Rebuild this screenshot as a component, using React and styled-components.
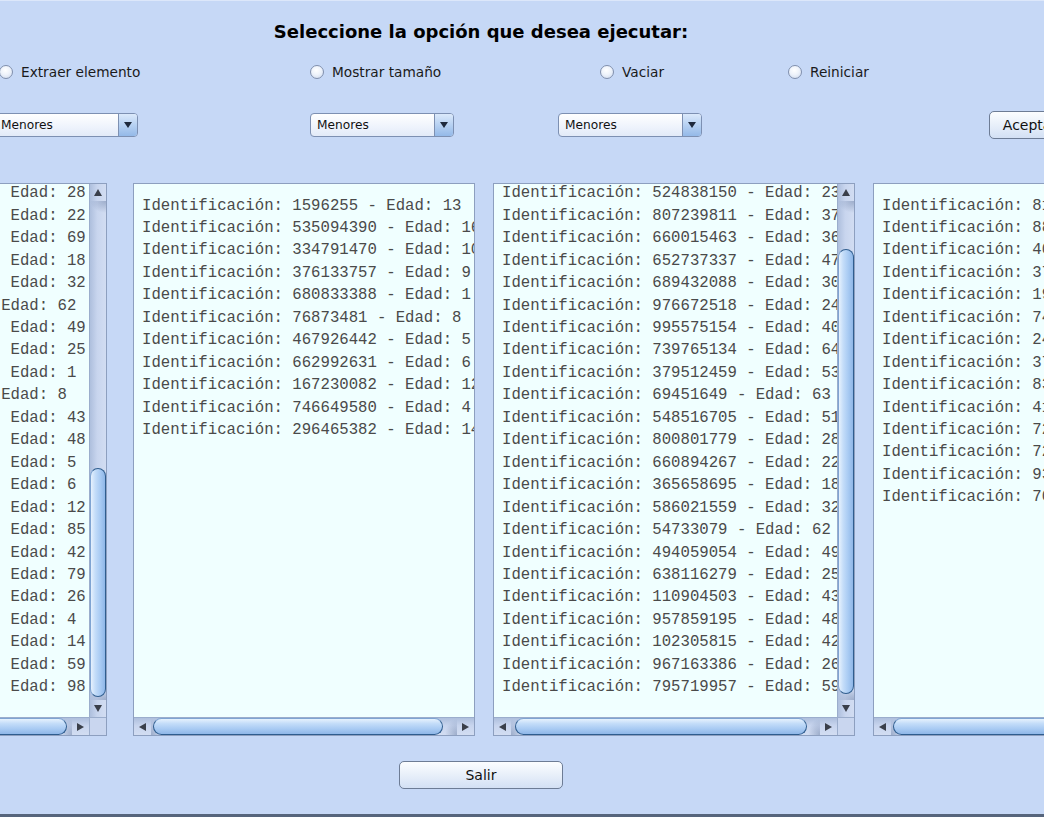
import React from 'react';
import styled, { createGlobalStyle } from 'styled-components';

const GlobalStyle = createGlobalStyle`
  html, body {
    margin: 0;
    padding: 0;
    background: #c6d8f6;
  }
  body {
    overflow: hidden;
  }
`;

const Frame = styled.div`
  width: 1044px;
  height: 817px;
  overflow: hidden;
  box-sizing: border-box;
  background: #c6d8f6;
  border-top: 1px solid #dce7fa;
  border-bottom: 3px solid #56657c;
  font-family: "DejaVu Sans", Verdana, sans-serif;
  color: #111;
`;

// the Swing window is wider than the shot, so it hangs off both sides
const Window = styled.div`
  width: 1490px;
  margin-left: -264px;
  display: flex;
  flex-direction: column;
`;

const Title = styled.h1`
  margin: 20px 0 0;
  font-size: 18px;
  line-height: 22px;
  font-weight: bold;
  text-align: center;
  color: #000;
`;

const RadioRow = styled.div`
  display: grid;
  grid-template-columns: 311px 290px 188px auto;
  padding-left: 263px;
  margin-top: 19px;
  height: 20px;
  align-items: center;
`;

const RadioOption = styled.label`
  display: flex;
  align-items: center;
  gap: 8px;
  font-size: 13.7px;
  color: #1a1a1a;
`;

const RadioDot = styled.span`
  width: 14px;
  height: 14px;
  box-sizing: border-box;
  border-radius: 50%;
  border: 1px solid #8190ad;
  background: radial-gradient(circle at 45% 35%, #ffffff 0%, #eef3fb 45%, #cbd7ec 100%);
`;

const ControlRow = styled.div`
  display: grid;
  grid-template-columns: 316px 248px 431px auto;
  padding-left: 258px;
  margin-top: 29px;
  height: 28px;
  align-items: center;
`;

const Combo = styled.div`
  width: 144px;
  height: 24px;
  box-sizing: border-box;
  display: flex;
  border: 1px solid #7d90b2;
  border-radius: 4px;
  overflow: hidden;
  background: linear-gradient(#ffffff, #eef3fc 60%, #e2eaf8);
`;

const ComboText = styled.span`
  flex: 1;
  padding-left: 6px;
  font-size: 12.2px;
  line-height: 23px;
  color: #111;
`;

const ComboArrow = styled.span`
  width: 18px;
  border-left: 1px solid #7d90b2;
  display: flex;
  align-items: center;
  justify-content: center;
  background: linear-gradient(#dbe9fb, #b7d1f2 50%, #94b9e8);

  &::after {
    content: '';
    border-left: 4px solid transparent;
    border-right: 4px solid transparent;
    border-top: 6px solid #1f2a3d;
  }
`;

const PushButton = styled.button`
  width: ${p => p.$width}px;
  height: 28px;
  box-sizing: border-box;
  padding: 0;
  border: 1px solid #6d7c95;
  border-radius: 5px;
  background: linear-gradient(#fbfdff, #e6eef9 55%, #d3e0f4);
  font-family: "DejaVu Sans", Verdana, sans-serif;
  font-size: 14px;
  color: #111;
`;

const PanelRow = styled.div`
  display: flex;
  padding-left: 9px;
  margin-top: 44px;
  height: 553px;
`;

const Panel = styled.div`
  flex: none;
  width: ${p => p.$width}px;
  margin-left: ${p => p.$gap}px;
  box-sizing: border-box;
  border: 1px solid #8d9fbf;
  background: #f0ffff;
  display: grid;
  grid-template-columns: ${p => (p.$vscroll ? '1fr 17px' : '1fr')};
  grid-template-rows: 1fr 18px;
  overflow: hidden;
`;

const Viewport = styled.div`
  overflow: hidden;
  min-width: 0;
`;

const Lines = styled.pre`
  margin: ${p => p.$shiftY}px 0 0 ${p => p.$shiftX}px;
  padding: 10.5px 0 0 8px;
  font-family: "Liberation Mono", "Courier New", monospace;
  font-size: 15.67px;
  line-height: 22.45px;
  color: #4a4a4a;
  white-space: pre;
`;

const VBar = styled.div`
  display: flex;
  flex-direction: column;
  box-sizing: border-box;
  border-left: 1px solid #9badcc;
  background: linear-gradient(to right, #aebfdd, #c8d5ee 45%, #d2ddf2);
`;

const HBar = styled.div`
  display: flex;
  box-sizing: border-box;
  border-top: 1px solid #9badcc;
  background: linear-gradient(#aebfdd, #c8d5ee 45%, #d2ddf2);
  min-width: 0;
`;

const Corner = styled.div`
  box-sizing: border-box;
  border-left: 1px solid #9badcc;
  border-top: 1px solid #9badcc;
  background: #c9d6ef;
`;

const arrowShapes = {
  up: 'border-left: 4px solid transparent; border-right: 4px solid transparent; border-bottom: 7px solid #3a3f4a;',
  down: 'border-left: 4px solid transparent; border-right: 4px solid transparent; border-top: 7px solid #3a3f4a;',
  left: 'border-top: 4px solid transparent; border-bottom: 4px solid transparent; border-right: 7px solid #3a3f4a;',
  right: 'border-top: 4px solid transparent; border-bottom: 4px solid transparent; border-left: 7px solid #3a3f4a;',
};

const ArrowBtn = styled.div`
  flex: none;
  width: ${p => (p.$dir === 'up' || p.$dir === 'down' ? 'auto' : '17px')};
  height: ${p => (p.$dir === 'up' || p.$dir === 'down' ? '17px' : 'auto')};
  display: flex;
  align-items: center;
  justify-content: center;

  &::after {
    content: '';
    ${p => arrowShapes[p.$dir]}
  }
`;

// shaded caps where the arrow buttons curve into the track
const Track = styled.div`
  flex: 1;
  display: flex;
  flex-direction: ${p => (p.$vertical ? 'column' : 'row')};
  overflow: hidden;
  min-width: 0;
  background: ${p =>
    p.$vertical
      ? `radial-gradient(ellipse 16px 12px at 100% 0, rgba(60, 85, 130, 0.35), transparent 100%),
         radial-gradient(ellipse 16px 12px at 100% 100%, rgba(60, 85, 130, 0.35), transparent 100%)`
      : `radial-gradient(ellipse 12px 16px at 0 100%, rgba(60, 85, 130, 0.35), transparent 100%),
         radial-gradient(ellipse 12px 16px at 100% 100%, rgba(60, 85, 130, 0.35), transparent 100%)`};
`;

const VThumb = styled.div`
  flex: none;
  margin-top: ${p => p.$start}px;
  height: ${p => p.$size}px;
  box-sizing: border-box;
  border: 1px solid #2f5d8e;
  border-left-color: #7fa4d2;
  border-radius: 9px;
  background: linear-gradient(to right, #e6f1fd 0%, #c4ddf9 30%, #a9cbf3 65%, #8fb7e8 100%);
`;

const HThumb = styled.div`
  flex: none;
  margin-left: ${p => p.$start}px;
  width: ${p => p.$size}px;
  box-sizing: border-box;
  border: 1px solid #2f5d8e;
  border-top-color: #7fa4d2;
  border-radius: 9px;
  background: linear-gradient(#e6f1fd 0%, #c4ddf9 30%, #a9cbf3 65%, #8fb7e8 100%);
`;

const Footer = styled.div`
  display: flex;
  justify-content: center;
  margin-top: 25px;
`;

const row = ([id, age]) => `Identificación: ${id} - Edad: ${age}`;

const panelData = [
  {
    width: 362, gap: 0, shiftX: -6.5, shiftY: -12.2,
    v: { start: 267, size: 229 }, h: { start: 6, size: 298 },
    rows: [
      ['283746512', 28], ['918273645', 22], ['564738291', 69], ['102938475', 18],
      ['647382910', 32], ['73829104', 62], ['829301746', 49], ['456372819', 25],
      ['390182734', 1], ['61728394', 8], ['745839201', 43], ['238475610', 48],
      ['918374652', 5], ['506172839', 6], ['837261945', 12], ['129384756', 85],
      ['674839201', 42], ['382910475', 79], ['495867213', 26], ['710293845', 4],
      ['263748591', 14], ['584930172', 59], ['172839465', 98],
    ],
  },
  {
    width: 342, gap: 26, shiftX: 0, shiftY: 0,
    v: null, h: { start: 2, size: 290 },
    rows: [
      ['1596255', 13], ['535094390', 16], ['334791470', 10], ['376133757', 9],
      ['680833388', 1], ['76873481', 8], ['467926442', 5], ['662992631', 6],
      ['167230082', 12], ['746649580', 4], ['296465382', 14],
    ],
  },
  {
    width: 362, gap: 18, shiftX: 0, shiftY: -12.2,
    v: { start: 48, size: 445 }, h: { start: 4, size: 292 },
    rows: [
      ['524838150', 23], ['807239811', 37], ['660015463', 36], ['652737337', 47],
      ['689432088', 30], ['976672518', 24], ['995575154', 40], ['739765134', 64],
      ['379512459', 53], ['69451649', 63], ['548516705', 51], ['800801779', 28],
      ['660894267', 22], ['365658695', 18], ['586021559', 32], ['54733079', 62],
      ['494059054', 49], ['638116279', 25], ['110904503', 43], ['957859195', 48],
      ['102305815', 42], ['967163386', 26], ['795719957', 59],
    ],
  },
  {
    width: 342, gap: 18, shiftX: 0, shiftY: 0,
    v: null, h: { start: 2, size: 290 },
    rows: [
      ['815236470', 33], ['884120957', 51], ['402938176', 27], ['371648290', 66],
      ['190573824', 12], ['745019283', 39], ['248603917', 71], ['379184026', 45],
      ['831907462', 20], ['417260395', 58], ['729485013', 9], ['721836540', 34],
      ['936051728', 77], ['706381249', 16],
    ],
  },
];

const TextPanel = ({ data }) => (
  <Panel $width={data.width} $gap={data.gap} $vscroll={!!data.v}>
    <Viewport>
      <Lines $shiftX={data.shiftX} $shiftY={data.shiftY}>
        {data.rows.map(row).join('\n')}
      </Lines>
    </Viewport>
    {data.v && (
      <VBar>
        <ArrowBtn $dir="up" />
        <Track $vertical>
          <VThumb $start={data.v.start} $size={data.v.size} />
        </Track>
        <ArrowBtn $dir="down" />
      </VBar>
    )}
    <HBar>
      <ArrowBtn $dir="left" />
      <Track>
        <HThumb $start={data.h.start} $size={data.h.size} />
      </Track>
      <ArrowBtn $dir="right" />
    </HBar>
    {data.v && <Corner />}
  </Panel>
);

const options = ['Extraer elemento', 'Mostrar tamaño', 'Vaciar', 'Reiniciar'];

export default function App() {
  return (
    <>
      <GlobalStyle />
      <Frame>
        <Window>
          <Title>Seleccione la opción que desea ejecutar:</Title>

          <RadioRow>
            {options.map(o => (
              <RadioOption key={o}>
                <RadioDot />
                {o}
              </RadioOption>
            ))}
          </RadioRow>

          <ControlRow>
            {[0, 1, 2].map(i => (
              <Combo key={i}>
                <ComboText>Menores</ComboText>
                <ComboArrow />
              </Combo>
            ))}
            <PushButton $width={82}>Aceptar</PushButton>
          </ControlRow>

          <PanelRow>
            {panelData.map((p, i) => (
              <TextPanel key={i} data={p} />
            ))}
          </PanelRow>

          <Footer>
            <PushButton $width={164}>Salir</PushButton>
          </Footer>
        </Window>
      </Frame>
    </>
  );
}
